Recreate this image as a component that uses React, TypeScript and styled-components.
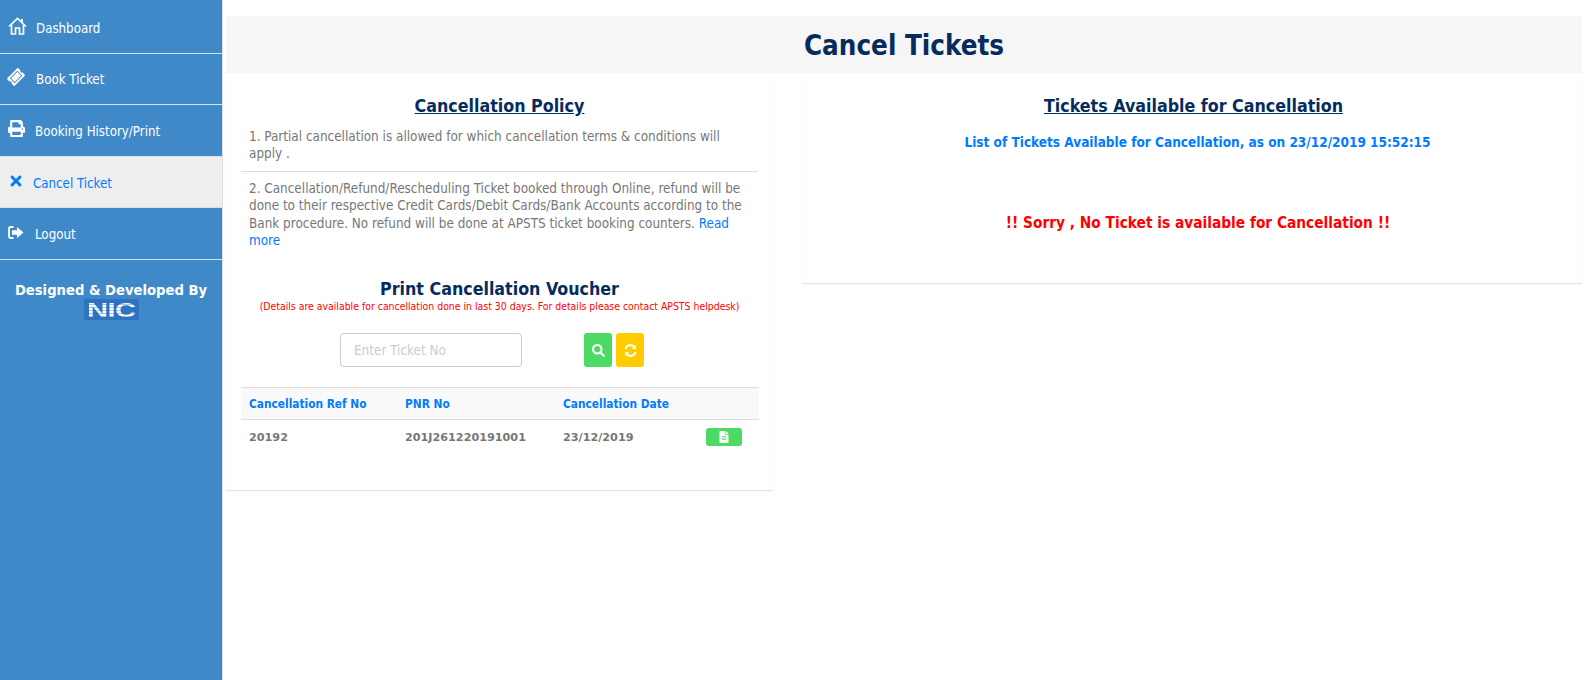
import styled, { createGlobalStyle } from 'styled-components';
import { FaPrint, FaTimes, FaSearch, FaTicketAlt, FaFileAlt } from 'react-icons/fa';
import { ReactNode } from 'react';

const bodyFont = '"DejaVu Sans Condensed", "DejaVu Sans", sans-serif';
const wideFont = '"DejaVu Sans", sans-serif';

const GlobalStyle = createGlobalStyle`
    html, body {
        margin: 0;
        padding: 0;
        background: #fff;
    }
    * {
        box-sizing: border-box;
    }
`

const Page = styled.div`
    display: flex;
    width: 1586px;
    height: 680px;
    overflow: hidden;
    font-family: ${bodyFont};
    font-size: 13.4px;
    color: #777;
`

const Sidebar = styled.nav`
    flex: 0 0 223px;
    padding-top: 2px;
    background: #4089c9;
    border-right: 1px solid #ddd;
`

const NavItem = styled.a<{ $active?: boolean; $gap: number }>`
    display: flex;
    align-items: center;
    height: 51.6px;
    padding: 2px 0 0 8px;
    gap: ${props => props.$gap}px;
    font-size: 13.2px;
    color: ${props => props.$active ? '#007bff' : '#fff'};
    background: ${props => props.$active ? '#eee' : 'transparent'};
    border-bottom: 1px solid ${props => props.$active ? '#ddd' : '#d3e2f0'};
`

const NavIcon = styled.span`
    display: flex;
    align-items: center;
    justify-content: center;
    flex: 0 0 auto;
    margin-top: -5px;
`

const Credit = styled.div`
    display: flex;
    flex-direction: column;
    align-items: center;
    padding-top: 23px;
    font-family: ${wideFont};
    font-size: 13.2px;
    font-weight: 700;
    color: #fff;
    line-height: 15px;
`

const NicLogo = styled.span`
    display: block;
    width: 55px;
    height: 21px;
    margin-top: 1px;
    border-radius: 2px;
    background: #2f72c0;
    text-align: center;
`

const NicLetters = styled.span`
    display: inline-block;
    font-family: "Liberation Sans", sans-serif;
    font-size: 21px;
    font-weight: 700;
    line-height: 21px;
    transform: scaleX(1.4);
    letter-spacing: -0.5px;
    color: transparent;
    background: repeating-linear-gradient(180deg, #fff 0 2px, #a9c6e8 2px 3px);
    -webkit-background-clip: text;
    background-clip: text;
`

const Main = styled.main`
    flex: 1;
    padding: 16px 4px 0 3px;
`

const TitleBar = styled.h1`
    display: flex;
    align-items: center;
    justify-content: center;
    height: 57px;
    margin: 0;
    background: #f6f6f6;
    font-size: 27.5px;
    font-weight: 700;
    color: #052c5c;
`

const Columns = styled.div`
    display: flex;
    align-items: flex-start;
    justify-content: space-between;
`

const Panel = styled.section<{ $width: number; $height: number }>`
    width: ${props => props.$width}px;
    height: ${props => props.$height}px;
    padding: 22px 15px 0;
    background: #fff;
    box-shadow: 0 1px 1px rgba(0, 0, 0, 0.1);
`

const SectionHeading = styled.h2<{ $underline?: boolean; $shift?: number }>`
    margin: 0;
    padding-left: ${props => props.$shift || 0}px;
    font-size: 17.7px;
    line-height: 22px;
    font-weight: 700;
    text-align: center;
    color: #052c5c;
    text-decoration: ${props => props.$underline ? 'underline' : 'none'};
`

const PolicyText = styled.p`
    margin: 0;
    padding: 11px 8px 8px;
    line-height: 17.4px;
    border-bottom: 1px solid #ddd;
    &:last-of-type {
        border-bottom: none;
        padding-top: 8px;
        padding-bottom: 8px;
    }
`

const MoreLink = styled.a`
    color: #007bff;
`

const VoucherBlock = styled.div`
    margin-top: 21px;
`

const Hint = styled.div`
    font-size: 10.4px;
    line-height: 13px;
    text-align: center;
    color: #f00;
`

const SearchRow = styled.div`
    display: flex;
    margin-top: 20px;
    padding-left: 99px;
`

const TicketInput = styled.input`
    width: 182px;
    height: 34px;
    padding: 0 13px;
    margin-right: 62px;
    border: 1px solid #ccc;
    border-radius: 4px;
    font-family: ${bodyFont};
    font-size: 13.4px;
    color: #777;
    outline: none;
    &::placeholder {
        color: #ccc;
    }
`

const IconButton = styled.button<{ $color: string }>`
    display: flex;
    align-items: center;
    justify-content: center;
    width: 28px;
    height: 34px;
    margin-right: 4px;
    padding: 0;
    border: none;
    border-radius: 3px;
    color: #fff;
    background: ${props => props.$color};
`

const VoucherTable = styled.table`
    width: 100%;
    margin-top: 20px;
    border-collapse: collapse;
    table-layout: fixed;
`

const HeadCell = styled.th<{ $width: number }>`
    width: ${props => props.$width}px;
    height: 32px;
    padding: 0 8px;
    font-size: 11.8px;
    font-weight: 700;
    text-align: left;
    color: #007bff;
    background: #f9f9f9;
    border-top: 1px solid #ddd;
    border-bottom: 1px solid #ddd;
`

const BodyCell = styled.td`
    height: 34px;
    padding: 0 8px;
    font-family: ${wideFont};
    font-size: 11.2px;
    font-weight: 700;
    color: #777;
`

const DocButton = styled.button`
    display: flex;
    align-items: center;
    justify-content: center;
    width: 36px;
    height: 18px;
    padding: 0;
    border: none;
    border-radius: 3px;
    color: #fff;
    background: #4cd964;
`

const AvailableLine = styled.div`
    margin-top: 16px;
    padding-left: 10px;
    font-weight: 700;
    font-size: 13.5px;
    line-height: 18px;
    text-align: center;
    color: #007bff;
`

const SorryLine = styled.div`
    margin-top: 62px;
    padding-left: 11px;
    font-weight: 700;
    font-size: 15.3px;
    line-height: 20px;
    text-align: center;
    color: #f00;
`

const HomeIcon = () => (
    <svg width="19" height="18" viewBox="0 0 19 18" fill="none" stroke="#fff" strokeWidth="1.7">
        <path d="M1 9.5 L9.5 1.5 L18 9.5" />
        <path d="M3.5 8 V17 H7.5 V11 H11.5 V17 H15.5 V8" />
        <path d="M14 2 V5" strokeWidth="2" />
    </svg>
)

const LogoutIcon = () => (
    <svg width="16" height="13" viewBox="0 0 16 13" fill="#fff">
        <path d="M5.5 1 H2.5 Q1 1 1 2.5 V10.5 Q1 12 2.5 12 H5.5" fill="none" stroke="#fff" strokeWidth="1.8" />
        <path d="M4 4.2 H9 V1 L15.5 6.5 L9 12 V8.8 H4 Z" />
    </svg>
)

const RefreshIcon = () => (
    <svg width="13" height="13" viewBox="0 0 13 13" fill="none" stroke="#fff" strokeWidth="2">
        <path d="M1.5 5 A5 5 0 0 1 10.2 3" />
        <path d="M11.5 8 A5 5 0 0 1 2.8 10" />
        <path d="M12 0.8 V5 H7.8 Z" fill="#fff" stroke="none" />
        <path d="M1 12.2 V8 H5.2 Z" fill="#fff" stroke="none" />
    </svg>
)

interface NavEntry {
    label: string
    icon: ReactNode
    gap: number
    active?: boolean
}

const navEntries: NavEntry[] = [
    { label: 'Dashboard', icon: <HomeIcon />, gap: 9 },
    { label: 'Book Ticket', icon: <FaTicketAlt size={16} style={{ transform: 'rotate(-45deg)' }} />, gap: 12 },
    { label: 'Booking History/Print', icon: <FaPrint size={17} />, gap: 10 },
    { label: 'Cancel Ticket', icon: <FaTimes size={16} />, gap: 9, active: true },
    { label: 'Logout', icon: <LogoutIcon />, gap: 11 },
]

const App = () => {
    return (
        <Page>
            <GlobalStyle />
            <Sidebar>
                {navEntries.map(entry => (
                    <NavItem key={entry.label} $active={entry.active} $gap={entry.gap}>
                        <NavIcon>{entry.icon}</NavIcon>
                        {entry.label}
                    </NavItem>
                ))}
                <Credit>
                    Designed &amp; Developed By
                    <NicLogo><NicLetters>NIC</NicLetters></NicLogo>
                </Credit>
            </Sidebar>
            <Main>
                <TitleBar>Cancel Tickets</TitleBar>
                <Columns>
                    <Panel $width={547} $height={417}>
                        <SectionHeading $underline>Cancellation Policy</SectionHeading>
                        <PolicyText>1. Partial cancellation is allowed for which cancellation terms &amp; conditions will apply .</PolicyText>
                        <PolicyText>
                            2. Cancellation/Refund/Rescheduling Ticket booked through Online, refund will be done to their respective Credit Cards/Debit Cards/Bank Accounts according to the Bank procedure. No refund will be done at APSTS ticket booking counters. <MoreLink>Read more</MoreLink>
                        </PolicyText>
                        <VoucherBlock>
                            <SectionHeading>Print Cancellation Voucher</SectionHeading>
                            <Hint>(Details are available for cancellation done in last 30 days. For details please contact APSTS helpdesk)</Hint>
                            <SearchRow>
                                <TicketInput placeholder="Enter Ticket No" />
                                <IconButton $color="#4cd964"><FaSearch size={13} /></IconButton>
                                <IconButton $color="#ffcc00"><RefreshIcon /></IconButton>
                            </SearchRow>
                            <VoucherTable>
                                <thead>
                                    <tr>
                                        <HeadCell $width={156}>Cancellation Ref No</HeadCell>
                                        <HeadCell $width={158}>PNR No</HeadCell>
                                        <HeadCell $width={143}>Cancellation Date</HeadCell>
                                        <HeadCell $width={61} />
                                    </tr>
                                </thead>
                                <tbody>
                                    <tr>
                                        <BodyCell>20192</BodyCell>
                                        <BodyCell>201J261220191001</BodyCell>
                                        <BodyCell>23/12/2019</BodyCell>
                                        <BodyCell><DocButton><FaFileAlt size={12} /></DocButton></BodyCell>
                                    </tr>
                                </tbody>
                            </VoucherTable>
                        </VoucherBlock>
                    </Panel>
                    <Panel $width={779} $height={210}>
                        <SectionHeading $underline $shift={2}>Tickets Available for Cancellation</SectionHeading>
                        <AvailableLine>List of Tickets Available for Cancellation, as on 23/12/2019 15:52:15</AvailableLine>
                        <SorryLine>!! Sorry , No Ticket is available for Cancellation !!</SorryLine>
                    </Panel>
                </Columns>
            </Main>
        </Page>
    )
}

export default App;
